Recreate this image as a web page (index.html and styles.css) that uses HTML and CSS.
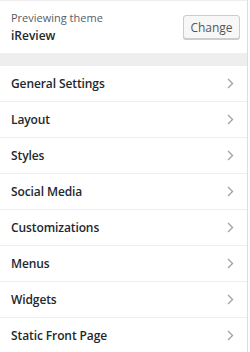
FILE: index.html
```html
<!DOCTYPE html>
<html>
<head>
<meta charset="utf-8">
<link rel="stylesheet" href="styles.css">
</head>
<body>
<div class="panel">
  <div class="theme-info">
    <div class="theme-text">
      <div class="preview-label">Previewing theme</div>
      <div class="theme-name">iReview</div>
    </div>
    <button class="change-btn">Change</button>
  </div>
  <div class="spacer"></div>
  <ul class="sections">
    <li class="section"><span>General Settings</span><svg class="chev" width="7" height="11" viewBox="0 0 7 11"><path d="M1 1 L5.5 5.5 L1 10" fill="none" stroke="#a0a5aa" stroke-width="1.4"/></svg></li>
    <li class="section"><span>Layout</span><svg class="chev" width="7" height="11" viewBox="0 0 7 11"><path d="M1 1 L5.5 5.5 L1 10" fill="none" stroke="#a0a5aa" stroke-width="1.4"/></svg></li>
    <li class="section"><span>Styles</span><svg class="chev" width="7" height="11" viewBox="0 0 7 11"><path d="M1 1 L5.5 5.5 L1 10" fill="none" stroke="#a0a5aa" stroke-width="1.4"/></svg></li>
    <li class="section"><span>Social Media</span><svg class="chev" width="7" height="11" viewBox="0 0 7 11"><path d="M1 1 L5.5 5.5 L1 10" fill="none" stroke="#a0a5aa" stroke-width="1.4"/></svg></li>
    <li class="section"><span>Customizations</span><svg class="chev" width="7" height="11" viewBox="0 0 7 11"><path d="M1 1 L5.5 5.5 L1 10" fill="none" stroke="#a0a5aa" stroke-width="1.4"/></svg></li>
    <li class="section"><span>Menus</span><svg class="chev" width="7" height="11" viewBox="0 0 7 11"><path d="M1 1 L5.5 5.5 L1 10" fill="none" stroke="#a0a5aa" stroke-width="1.4"/></svg></li>
    <li class="section"><span>Widgets</span><svg class="chev" width="7" height="11" viewBox="0 0 7 11"><path d="M1 1 L5.5 5.5 L1 10" fill="none" stroke="#a0a5aa" stroke-width="1.4"/></svg></li>
    <li class="section"><span>Static Front Page</span><svg class="chev" width="7" height="11" viewBox="0 0 7 11"><path d="M1 1 L5.5 5.5 L1 10" fill="none" stroke="#a0a5aa" stroke-width="1.4"/></svg></li>
  </ul>
</div>
</body>
</html>
```

FILE: styles.css
```css
html, body {
  margin: 0;
  padding: 0;
  background: #fff;
}
body {
  font-family: "Open Sans", "Liberation Sans", sans-serif;
  color: #23282d;
}
.panel {
  width: 247px;
  height: 352px;
  border-right: 1px solid #ddd;
  background: #fff;
}
.theme-info {
  height: 52px;
  border-top: 1px solid #eee;
  display: flex;
  align-items: flex-start;
  justify-content: space-between;
  padding: 0 7px 0 11px;
}
.theme-text {
  padding-top: 9px;
}
.preview-label {
  font-size: 11px;
  line-height: 16px;
  color: #555d66;
}
.theme-name {
  font-size: 12px;
  line-height: 19px;
  font-weight: 600;
  color: #23282d;
}
.change-btn {
  margin-top: 14px;
  height: 24px;
  width: 57px;
  padding: 0;
  font-family: "Open Sans", "Liberation Sans", sans-serif;
  font-size: 12px;
  color: #555;
  background: #f7f7f7;
  border: 1px solid #ccc;
  border-radius: 3px;
  box-shadow: 0 1px 0 #ccc;
}
.spacer {
  height: 13px;
  background: #eee;
}
.sections {
  list-style: none;
  margin: 0;
  padding: 0;
}
.section {
  height: 35px;
  border-bottom: 1px solid #eee;
  display: flex;
  align-items: center;
  justify-content: space-between;
  padding: 0 13px 0 11px;
  font-size: 12px;
  font-weight: 600;
  letter-spacing: -0.1px;
  color: #23282d;
}
.chev {
  display: block;
}
```
